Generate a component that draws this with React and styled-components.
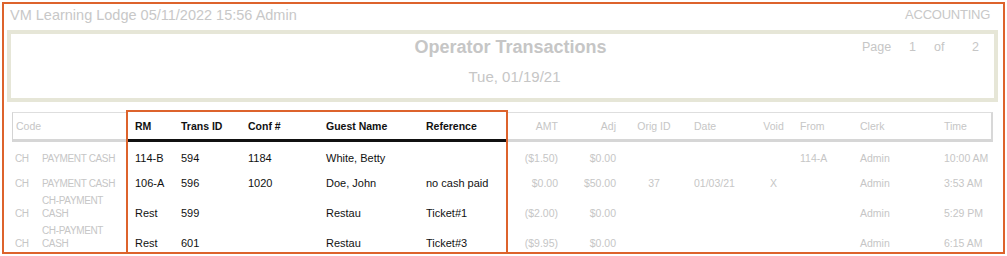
import React from "react";
import styled, { createGlobalStyle } from "styled-components";

const GlobalStyle = createGlobalStyle`
    body {
        margin: 0;
        background: #fff;
        font-family: "Liberation Sans", Arial, sans-serif;
    }
`;

const Frame = styled.div`
    box-sizing: border-box;
    width: 1003px;
    height: 252px;
    margin: 2px 0 0 2px;
    padding: 0 5px 0 3px;
    border: 2px solid #dd632c;
`;

const TopBar = styled.div`
    height: 21px;
    margin-bottom: 5px;
    padding: 0 8px 0 3px;
    display: flex;
    justify-content: space-between;
    align-items: center;
    color: #c8c8c8;
`;

const Brand = styled.span`
    font-size: 14.5px;
`;

const Dept = styled.span`
    font-size: 13px;
    letter-spacing: -0.25px;
`;

const TitleBox = styled.div`
    box-sizing: border-box;
    height: 72px;
    border: 4px solid #e6e6d7;
    display: grid;
    grid-template-columns: 1fr auto 1fr;
    align-items: start;
    color: #c6c6c6;
`;

const TitleCenter = styled.div`
    grid-column: 2;
    padding: 2px 0 0 16px;
    display: flex;
    flex-direction: column;
    align-items: center;
`;

const Title = styled.div`
    font-size: 18px;
    line-height: 22px;
    font-weight: bold;
`;

const SubDate = styled.div`
    margin-top: 10px;
    padding-left: 8px;
    font-size: 15px;
    line-height: 18px;
`;

const PageInfo = styled.div`
    justify-self: end;
    padding: 6px 14px 0 0;
    display: grid;
    grid-template-columns: 47px 25px 38px 8px;
    font-size: 12.5px;
    line-height: 15px;
`;

const Table = styled.div`
    position: relative;
    margin: 10px 0 0 5px;
    width: 981px;
    display: grid;
    grid-template-columns: ${(p) => p.$cols};
    grid-template-rows: 30px repeat(${(p) => p.$rows}, minmax(25px, auto));
`;

const justify = { left: "flex-start", right: "flex-end", center: "center" };

const HeadCell = styled.div`
    box-sizing: border-box;
    display: flex;
    align-items: center;
    justify-content: ${(p) => justify[p.$align || "left"]};
    padding: 0 ${(p) => p.$pr || 0}px 0 ${(p) => p.$pl || 0}px;
    white-space: nowrap;
    font-size: 10.5px;
    border-top: 1px solid ${(p) => (p.$hl ? "transparent" : "#dedede")};
    border-bottom: 3px solid ${(p) => (p.$hl ? "#111" : "#d6d6d6")};
    border-left: ${(p) => (p.$first ? "1px solid #d4d4d4" : "none")};
    border-right: ${(p) => (p.$last ? "2px solid #d8d8d8" : "none")};
    color: ${(p) => (p.$hl ? "#111" : "#c6c6c6")};
    font-weight: ${(p) => (p.$hl ? "bold" : "normal")};
`;

const Cell = styled.div`
    display: flex;
    align-items: flex-end;
    justify-content: ${(p) => justify[p.$align || "left"]};
    padding: 2px ${(p) => p.$pr || 0}px 2px ${(p) => p.$pl || 0}px;
    line-height: 13px;
    font-size: ${(p) => (p.$hl ? "11px" : p.$caps ? "10px" : "10.5px")};
    letter-spacing: ${(p) => (p.$caps ? "-0.35px" : "normal")};
    color: ${(p) => (p.$hl ? "#111" : "#c6c6c6")};
    white-space: ${(p) => (p.$caps ? "normal" : "nowrap")};
`;

const Highlight = styled.div`
    position: absolute;
    grid-column: 3 / 8;
    grid-row: 1 / -1;
    inset: -2px;
    border: 2px solid #dd632c;
    pointer-events: none;
`;

const columns = [
    { label: "Code", w: 27, pl: 3, caps: true },
    { label: "", w: 89, pl: 3, caps: true },
    { label: "RM", w: 50, pl: 7, hl: true },
    { label: "Trans ID", w: 67, pl: 3, hl: true },
    { label: "Conf #", w: 77, pl: 3, hl: true },
    { label: "Guest Name", w: 100, pl: 4, hl: true },
    { label: "Reference", w: 84, pl: 4, hl: true },
    { label: "AMT", w: 56, align: "right", pr: 4 },
    { label: "Adj", w: 57, align: "right", pr: 3 },
    { label: "Orig ID", w: 70, align: "center" },
    { label: "Date", w: 63, pl: 5 },
    { label: "Void", w: 43, align: "center" },
    { label: "From", w: 60, pl: 5 },
    { label: "Clerk", w: 85, pl: 5 },
    { label: "Time", w: 53, pl: 4 },
];

const rows = [
    ["CH", "PAYMENT CASH", "114-B", "594", "1184", "White, Betty", "", "($1.50)", "$0.00", "", "", "", "114-A", "Admin", "10:00 AM"],
    ["CH", "PAYMENT CASH", "106-A", "596", "1020", "Doe, John", "no cash paid", "$0.00", "$50.00", "37", "01/03/21", "X", "", "Admin", "3:53 AM"],
    ["CH", "CH-PAYMENT CASH", "Rest", "599", "", "Restau", "Ticket#1", "($2.00)", "$0.00", "", "", "", "", "Admin", "5:29 PM"],
    ["CH", "CH-PAYMENT CASH", "Rest", "601", "", "Restau", "Ticket#3", "($9.95)", "$0.00", "", "", "", "", "Admin", "6:15 AM"],
];

const App = () => {
    const cols = columns.map((c) => `${c.w}px`).join(" ");
    return (
        <>
            <GlobalStyle />
            <Frame>
                <TopBar>
                    <Brand>VM Learning Lodge 05/11/2022 15:56 Admin</Brand>
                    <Dept>ACCOUNTING</Dept>
                </TopBar>
                <TitleBox>
                    <TitleCenter>
                        <Title>Operator Transactions</Title>
                        <SubDate>Tue, 01/19/21</SubDate>
                    </TitleCenter>
                    <PageInfo>
                        <span>Page</span>
                        <span>1</span>
                        <span>of</span>
                        <span>2</span>
                    </PageInfo>
                </TitleBox>
                <Table $cols={cols} $rows={rows.length}>
                    {columns.map((c, i) => (
                        <HeadCell
                            key={`h${i}`}
                            $hl={c.hl}
                            $align={c.align}
                            $pl={c.pl}
                            $pr={c.pr}
                            $first={i === 0}
                            $last={i === columns.length - 1}
                        >
                            {c.label}
                        </HeadCell>
                    ))}
                    {rows.map((row, r) =>
                        row.map((v, i) => (
                            <Cell
                                key={`${r}-${i}`}
                                $hl={columns[i].hl}
                                $caps={columns[i].caps}
                                $align={columns[i].align}
                                $pl={columns[i].pl}
                                $pr={columns[i].pr}
                            >
                                {v}
                            </Cell>
                        ))
                    )}
                    <Highlight />
                </Table>
            </Frame>
        </>
    );
};

export default App;
